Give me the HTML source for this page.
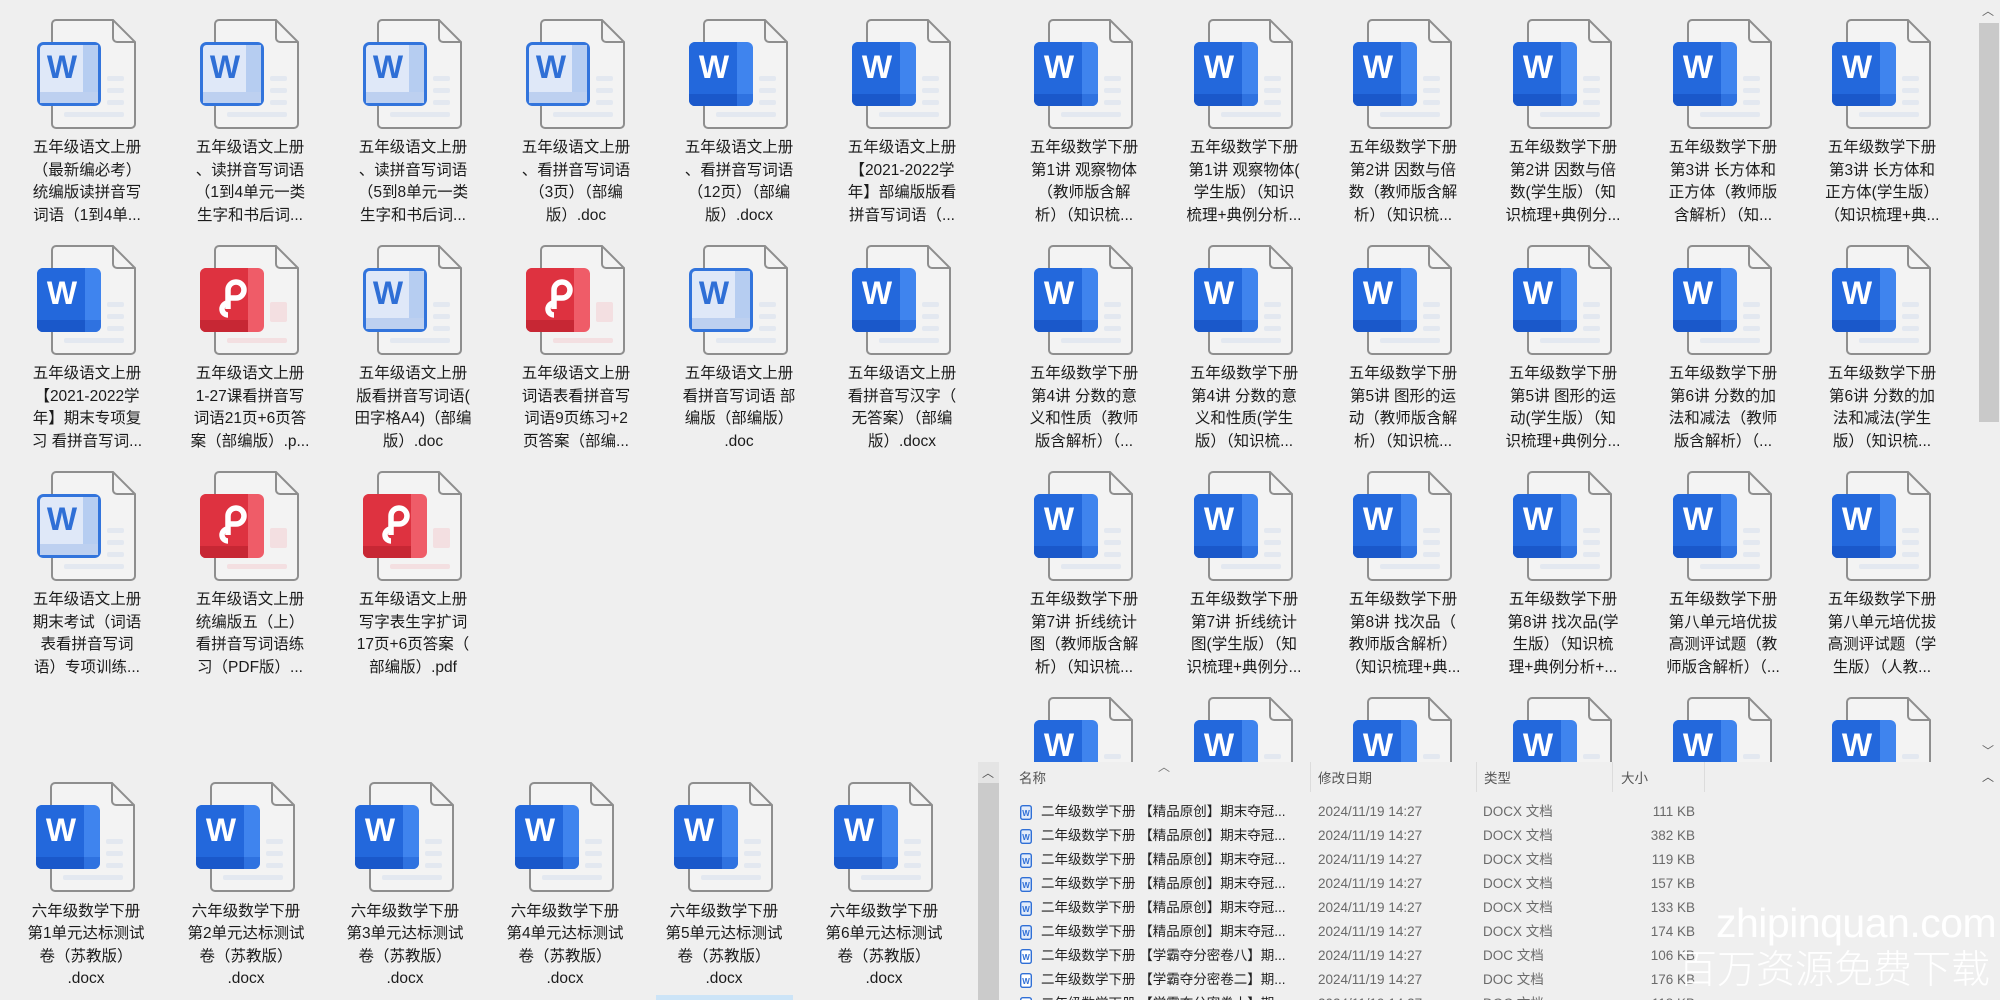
<!DOCTYPE html>
<html><head><meta charset="utf-8">
<style>
*{margin:0;padding:0;box-sizing:border-box}
html,body{width:2000px;height:1000px;overflow:hidden;background:#efefef}
body{position:relative;font-family:"Liberation Sans","Noto Sans CJK SC",sans-serif;color:#1b1b1b}
.it{position:absolute;width:150px;text-align:center}
.it svg{display:block;width:100px;height:112px;margin-left:25px}
.it .t{margin-top:6px;font-size:15.5px;line-height:22.6px;white-space:nowrap}
#list{position:absolute;left:978px;top:762px;width:1022px;height:238px;background:#efefef;z-index:5}
.row{position:absolute;left:0;width:1022px;height:24px;font-size:13.5px;line-height:24px;white-space:nowrap;color:#222}
.row span{position:absolute;top:0}
.g{color:#6a6a6a}
.hd{position:absolute;top:5px;font-size:13.5px;color:#555}
.sep{position:absolute;top:0;width:1px;height:30px;background:#dcdcdc}
</style></head><body>
<svg width="0" height="0" style="position:absolute">
<defs>
<symbol id="pg" viewBox="0 0 100 112">
<path d="M19,1 H76 L98,23 V105 a4,4 0 0 1 -4,4 H19 a4,4 0 0 1 -4,-4 V5 a4,4 0 0 1 4,-4Z" fill="#f3f3f3" stroke="#8e8e8e" stroke-width="2"/>
<path d="M76,1 V19 a4,4 0 0 0 4,4 H98" fill="none" stroke="#8e8e8e" stroke-width="2"/>
<rect x="70" y="57" width="17" height="5" rx="2" fill="#e3e8f0"/>
<rect x="70" y="69" width="17" height="5" rx="2" fill="#e3e8f0"/>
<rect x="70" y="81" width="17" height="5" rx="2" fill="#e3e8f0"/>
<rect x="27" y="93" width="60" height="5" rx="2" fill="#e3e8f0"/>
</symbol>
<symbol id="pgr" viewBox="0 0 100 112">
<path d="M19,1 H76 L98,23 V105 a4,4 0 0 1 -4,4 H19 a4,4 0 0 1 -4,-4 V5 a4,4 0 0 1 4,-4Z" fill="#f3f3f3" stroke="#8e8e8e" stroke-width="2"/>
<path d="M76,1 V19 a4,4 0 0 0 4,4 H98" fill="none" stroke="#8e8e8e" stroke-width="2"/>
<rect x="70" y="57" width="17" height="20" rx="2" fill="#f3dfe1"/>
<rect x="27" y="93" width="60" height="5" rx="2" fill="#f3dfe1"/>
</symbol>
<symbol id="bs" viewBox="0 0 100 112">
<rect x="0" y="23" width="64" height="64" rx="6" fill="#3f84ee"/>
<path d="M6,23 H48 V87 H6 a6,6 0 0 1 -6,-6 V29 a6,6 0 0 1 6,-6Z" fill="#2368dc"/>
<path d="M0,75 H48 V87 H6 a6,6 0 0 1 -6,-6Z" fill="#1a58ca"/>
<path d="M48,75 H64 V81 a6,6 0 0 1 -6,6 H48Z" fill="#2f72e0"/>
</symbol>
<symbol id="bo" viewBox="0 0 100 112">
<rect x="1.5" y="24.5" width="61" height="61" rx="5" fill="#dfe8f8" stroke="#3274dc" stroke-width="3"/>
<rect x="46" y="26" width="15" height="58" fill="#b6cdf1"/>
<rect x="3" y="73" width="58" height="11" fill="#bdd0f0"/>
</symbol>
<symbol id="bp" viewBox="0 0 100 112">
<rect x="0" y="23" width="64" height="64" rx="6" fill="#ef5c68"/>
<path d="M6,23 H48 V87 H6 a6,6 0 0 1 -6,-6 V29 a6,6 0 0 1 6,-6Z" fill="#de3240"/>
<path d="M0,75 H48 V87 H6 a6,6 0 0 1 -6,-6Z" fill="#c72734"/>
<path d="M28,64 V45 a8,8 0 1 1 8,8 H28" fill="none" stroke="#fff" stroke-width="5.5"/>
<path d="M28,58 a6,6 0 1 0 0,12" fill="none" stroke="#fff" stroke-width="5.5"/>
</symbol>
</defs>
</svg>

<!-- TOP LEFT -->
<div class="it" style="left:12px;top:19px"><svg viewBox="0 0 100 112"><use href="#pg"/><use href="#bo"/><text x="25" y="59" font-size="32" font-weight="bold" text-anchor="middle" fill="#2f6fd6" font-family="Liberation Sans">W</text></svg><div class="t">五年级语文上册<br>（最新编必考）<br>统编版读拼音写<br>词语（1到4单...</div></div>
<div class="it" style="left:175px;top:19px"><svg viewBox="0 0 100 112"><use href="#pg"/><use href="#bo"/><text x="25" y="59" font-size="32" font-weight="bold" text-anchor="middle" fill="#2f6fd6" font-family="Liberation Sans">W</text></svg><div class="t">五年级语文上册<br>、读拼音写词语<br>（1到4单元一类<br>生字和书后词...</div></div>
<div class="it" style="left:338px;top:19px"><svg viewBox="0 0 100 112"><use href="#pg"/><use href="#bo"/><text x="25" y="59" font-size="32" font-weight="bold" text-anchor="middle" fill="#2f6fd6" font-family="Liberation Sans">W</text></svg><div class="t">五年级语文上册<br>、读拼音写词语<br>（5到8单元一类<br>生字和书后词...</div></div>
<div class="it" style="left:501px;top:19px"><svg viewBox="0 0 100 112"><use href="#pg"/><use href="#bo"/><text x="25" y="59" font-size="32" font-weight="bold" text-anchor="middle" fill="#2f6fd6" font-family="Liberation Sans">W</text></svg><div class="t">五年级语文上册<br>、看拼音写词语<br>（3页）（部编<br>版）.doc</div></div>
<div class="it" style="left:664px;top:19px"><svg viewBox="0 0 100 112"><use href="#pg"/><use href="#bs"/><text x="25" y="59" font-size="32" font-weight="bold" text-anchor="middle" fill="#fff" font-family="Liberation Sans">W</text></svg><div class="t">五年级语文上册<br>、看拼音写词语<br>（12页）（部编<br>版）.docx</div></div>
<div class="it" style="left:827px;top:19px"><svg viewBox="0 0 100 112"><use href="#pg"/><use href="#bs"/><text x="25" y="59" font-size="32" font-weight="bold" text-anchor="middle" fill="#fff" font-family="Liberation Sans">W</text></svg><div class="t">五年级语文上册<br>【2021-2022学<br>年】部编版版看<br>拼音写词语（...</div></div>

<div class="it" style="left:12px;top:245px"><svg viewBox="0 0 100 112"><use href="#pg"/><use href="#bs"/><text x="25" y="59" font-size="32" font-weight="bold" text-anchor="middle" fill="#fff" font-family="Liberation Sans">W</text></svg><div class="t">五年级语文上册<br>【2021-2022学<br>年】期末专项复<br>习 看拼音写词...</div></div>
<div class="it" style="left:175px;top:245px"><svg viewBox="0 0 100 112"><use href="#pgr"/><use href="#bp"/></svg><div class="t">五年级语文上册<br>1-27课看拼音写<br>词语21页+6页答<br>案（部编版）.p...</div></div>
<div class="it" style="left:338px;top:245px"><svg viewBox="0 0 100 112"><use href="#pg"/><use href="#bo"/><text x="25" y="59" font-size="32" font-weight="bold" text-anchor="middle" fill="#2f6fd6" font-family="Liberation Sans">W</text></svg><div class="t">五年级语文上册<br>版看拼音写词语(<br>田字格A4)（部编<br>版）.doc</div></div>
<div class="it" style="left:501px;top:245px"><svg viewBox="0 0 100 112"><use href="#pgr"/><use href="#bp"/></svg><div class="t">五年级语文上册<br>词语表看拼音写<br>词语9页练习+2<br>页答案（部编...</div></div>
<div class="it" style="left:664px;top:245px"><svg viewBox="0 0 100 112"><use href="#pg"/><use href="#bo"/><text x="25" y="59" font-size="32" font-weight="bold" text-anchor="middle" fill="#2f6fd6" font-family="Liberation Sans">W</text></svg><div class="t">五年级语文上册<br>看拼音写词语 部<br>编版（部编版）<br>.doc</div></div>
<div class="it" style="left:827px;top:245px"><svg viewBox="0 0 100 112"><use href="#pg"/><use href="#bs"/><text x="25" y="59" font-size="32" font-weight="bold" text-anchor="middle" fill="#fff" font-family="Liberation Sans">W</text></svg><div class="t">五年级语文上册<br>看拼音写汉字（<br>无答案）（部编<br>版）.docx</div></div>

<div class="it" style="left:12px;top:471px"><svg viewBox="0 0 100 112"><use href="#pg"/><use href="#bo"/><text x="25" y="59" font-size="32" font-weight="bold" text-anchor="middle" fill="#2f6fd6" font-family="Liberation Sans">W</text></svg><div class="t">五年级语文上册<br>期末考试（词语<br>表看拼音写词<br>语）专项训练...</div></div>
<div class="it" style="left:175px;top:471px"><svg viewBox="0 0 100 112"><use href="#pgr"/><use href="#bp"/></svg><div class="t">五年级语文上册<br>统编版五（上）<br>看拼音写词语练<br>习（PDF版）...</div></div>
<div class="it" style="left:338px;top:471px"><svg viewBox="0 0 100 112"><use href="#pgr"/><use href="#bp"/></svg><div class="t">五年级语文上册<br>写字表生字扩词<br>17页+6页答案（<br>部编版）.pdf</div></div>

<!-- RIGHT GRID -->
<div class="it" style="left:1009px;top:19px"><svg viewBox="0 0 100 112"><use href="#pg"/><use href="#bs"/><text x="25" y="59" font-size="32" font-weight="bold" text-anchor="middle" fill="#fff" font-family="Liberation Sans">W</text></svg><div class="t">五年级数学下册<br>第1讲 观察物体<br>（教师版含解<br>析）（知识梳...</div></div>
<div class="it" style="left:1169px;top:19px"><svg viewBox="0 0 100 112"><use href="#pg"/><use href="#bs"/><text x="25" y="59" font-size="32" font-weight="bold" text-anchor="middle" fill="#fff" font-family="Liberation Sans">W</text></svg><div class="t">五年级数学下册<br>第1讲 观察物体(<br>学生版）（知识<br>梳理+典例分析...</div></div>
<div class="it" style="left:1328px;top:19px"><svg viewBox="0 0 100 112"><use href="#pg"/><use href="#bs"/><text x="25" y="59" font-size="32" font-weight="bold" text-anchor="middle" fill="#fff" font-family="Liberation Sans">W</text></svg><div class="t">五年级数学下册<br>第2讲 因数与倍<br>数（教师版含解<br>析）（知识梳...</div></div>
<div class="it" style="left:1488px;top:19px"><svg viewBox="0 0 100 112"><use href="#pg"/><use href="#bs"/><text x="25" y="59" font-size="32" font-weight="bold" text-anchor="middle" fill="#fff" font-family="Liberation Sans">W</text></svg><div class="t">五年级数学下册<br>第2讲 因数与倍<br>数(学生版）（知<br>识梳理+典例分...</div></div>
<div class="it" style="left:1648px;top:19px"><svg viewBox="0 0 100 112"><use href="#pg"/><use href="#bs"/><text x="25" y="59" font-size="32" font-weight="bold" text-anchor="middle" fill="#fff" font-family="Liberation Sans">W</text></svg><div class="t">五年级数学下册<br>第3讲 长方体和<br>正方体（教师版<br>含解析）（知...</div></div>
<div class="it" style="left:1807px;top:19px"><svg viewBox="0 0 100 112"><use href="#pg"/><use href="#bs"/><text x="25" y="59" font-size="32" font-weight="bold" text-anchor="middle" fill="#fff" font-family="Liberation Sans">W</text></svg><div class="t">五年级数学下册<br>第3讲 长方体和<br>正方体(学生版）<br>（知识梳理+典...</div></div>

<div class="it" style="left:1009px;top:245px"><svg viewBox="0 0 100 112"><use href="#pg"/><use href="#bs"/><text x="25" y="59" font-size="32" font-weight="bold" text-anchor="middle" fill="#fff" font-family="Liberation Sans">W</text></svg><div class="t">五年级数学下册<br>第4讲 分数的意<br>义和性质（教师<br>版含解析）（...</div></div>
<div class="it" style="left:1169px;top:245px"><svg viewBox="0 0 100 112"><use href="#pg"/><use href="#bs"/><text x="25" y="59" font-size="32" font-weight="bold" text-anchor="middle" fill="#fff" font-family="Liberation Sans">W</text></svg><div class="t">五年级数学下册<br>第4讲 分数的意<br>义和性质(学生<br>版）（知识梳...</div></div>
<div class="it" style="left:1328px;top:245px"><svg viewBox="0 0 100 112"><use href="#pg"/><use href="#bs"/><text x="25" y="59" font-size="32" font-weight="bold" text-anchor="middle" fill="#fff" font-family="Liberation Sans">W</text></svg><div class="t">五年级数学下册<br>第5讲 图形的运<br>动（教师版含解<br>析）（知识梳...</div></div>
<div class="it" style="left:1488px;top:245px"><svg viewBox="0 0 100 112"><use href="#pg"/><use href="#bs"/><text x="25" y="59" font-size="32" font-weight="bold" text-anchor="middle" fill="#fff" font-family="Liberation Sans">W</text></svg><div class="t">五年级数学下册<br>第5讲 图形的运<br>动(学生版）（知<br>识梳理+典例分...</div></div>
<div class="it" style="left:1648px;top:245px"><svg viewBox="0 0 100 112"><use href="#pg"/><use href="#bs"/><text x="25" y="59" font-size="32" font-weight="bold" text-anchor="middle" fill="#fff" font-family="Liberation Sans">W</text></svg><div class="t">五年级数学下册<br>第6讲 分数的加<br>法和减法（教师<br>版含解析）（...</div></div>
<div class="it" style="left:1807px;top:245px"><svg viewBox="0 0 100 112"><use href="#pg"/><use href="#bs"/><text x="25" y="59" font-size="32" font-weight="bold" text-anchor="middle" fill="#fff" font-family="Liberation Sans">W</text></svg><div class="t">五年级数学下册<br>第6讲 分数的加<br>法和减法(学生<br>版）（知识梳...</div></div>

<div class="it" style="left:1009px;top:471px"><svg viewBox="0 0 100 112"><use href="#pg"/><use href="#bs"/><text x="25" y="59" font-size="32" font-weight="bold" text-anchor="middle" fill="#fff" font-family="Liberation Sans">W</text></svg><div class="t">五年级数学下册<br>第7讲 折线统计<br>图（教师版含解<br>析）（知识梳...</div></div>
<div class="it" style="left:1169px;top:471px"><svg viewBox="0 0 100 112"><use href="#pg"/><use href="#bs"/><text x="25" y="59" font-size="32" font-weight="bold" text-anchor="middle" fill="#fff" font-family="Liberation Sans">W</text></svg><div class="t">五年级数学下册<br>第7讲 折线统计<br>图(学生版）（知<br>识梳理+典例分...</div></div>
<div class="it" style="left:1328px;top:471px"><svg viewBox="0 0 100 112"><use href="#pg"/><use href="#bs"/><text x="25" y="59" font-size="32" font-weight="bold" text-anchor="middle" fill="#fff" font-family="Liberation Sans">W</text></svg><div class="t">五年级数学下册<br>第8讲 找次品（<br>教师版含解析）<br>（知识梳理+典...</div></div>
<div class="it" style="left:1488px;top:471px"><svg viewBox="0 0 100 112"><use href="#pg"/><use href="#bs"/><text x="25" y="59" font-size="32" font-weight="bold" text-anchor="middle" fill="#fff" font-family="Liberation Sans">W</text></svg><div class="t">五年级数学下册<br>第8讲 找次品(学<br>生版）（知识梳<br>理+典例分析+...</div></div>
<div class="it" style="left:1648px;top:471px"><svg viewBox="0 0 100 112"><use href="#pg"/><use href="#bs"/><text x="25" y="59" font-size="32" font-weight="bold" text-anchor="middle" fill="#fff" font-family="Liberation Sans">W</text></svg><div class="t">五年级数学下册<br>第八单元培优拔<br>高测评试题（教<br>师版含解析）（...</div></div>
<div class="it" style="left:1807px;top:471px"><svg viewBox="0 0 100 112"><use href="#pg"/><use href="#bs"/><text x="25" y="59" font-size="32" font-weight="bold" text-anchor="middle" fill="#fff" font-family="Liberation Sans">W</text></svg><div class="t">五年级数学下册<br>第八单元培优拔<br>高测评试题（学<br>生版）（人教...</div></div>

<div class="it" style="left:1009px;top:697px"><svg viewBox="0 0 100 112"><use href="#pg"/><use href="#bs"/><text x="25" y="59" font-size="32" font-weight="bold" text-anchor="middle" fill="#fff" font-family="Liberation Sans">W</text></svg></div>
<div class="it" style="left:1169px;top:697px"><svg viewBox="0 0 100 112"><use href="#pg"/><use href="#bs"/><text x="25" y="59" font-size="32" font-weight="bold" text-anchor="middle" fill="#fff" font-family="Liberation Sans">W</text></svg></div>
<div class="it" style="left:1328px;top:697px"><svg viewBox="0 0 100 112"><use href="#pg"/><use href="#bs"/><text x="25" y="59" font-size="32" font-weight="bold" text-anchor="middle" fill="#fff" font-family="Liberation Sans">W</text></svg></div>
<div class="it" style="left:1488px;top:697px"><svg viewBox="0 0 100 112"><use href="#pg"/><use href="#bs"/><text x="25" y="59" font-size="32" font-weight="bold" text-anchor="middle" fill="#fff" font-family="Liberation Sans">W</text></svg></div>
<div class="it" style="left:1648px;top:697px"><svg viewBox="0 0 100 112"><use href="#pg"/><use href="#bs"/><text x="25" y="59" font-size="32" font-weight="bold" text-anchor="middle" fill="#fff" font-family="Liberation Sans">W</text></svg></div>
<div class="it" style="left:1807px;top:697px"><svg viewBox="0 0 100 112"><use href="#pg"/><use href="#bs"/><text x="25" y="59" font-size="32" font-weight="bold" text-anchor="middle" fill="#fff" font-family="Liberation Sans">W</text></svg></div>

<!-- right scrollbar -->
<div style="position:absolute;left:1978px;top:0;width:22px;height:762px;background:#efefef;z-index:4"></div>
<div style="position:absolute;left:1982px;top:2px;font-size:12px;color:#666;z-index:4">︿</div>
<div style="position:absolute;left:1979px;top:23px;width:20px;height:399px;background:#c9c9c9;z-index:4"></div>
<div style="position:absolute;left:1982px;top:742px;font-size:12px;color:#666;z-index:4">﹀</div>

<!-- BOTTOM LEFT -->
<div style="position:absolute;left:656px;top:995px;width:137px;height:5px;background:#cce4f7"></div>
<div class="it" style="left:11px;top:782px"><svg viewBox="0 0 100 112"><use href="#pg"/><use href="#bs"/><text x="25" y="59" font-size="32" font-weight="bold" text-anchor="middle" fill="#fff" font-family="Liberation Sans">W</text></svg><div class="t" style="margin-top:7px;line-height:22.4px">六年级数学下册<br>第1单元达标测试<br>卷（苏教版）<br>.docx</div></div>
<div class="it" style="left:171px;top:782px"><svg viewBox="0 0 100 112"><use href="#pg"/><use href="#bs"/><text x="25" y="59" font-size="32" font-weight="bold" text-anchor="middle" fill="#fff" font-family="Liberation Sans">W</text></svg><div class="t" style="margin-top:7px;line-height:22.4px">六年级数学下册<br>第2单元达标测试<br>卷（苏教版）<br>.docx</div></div>
<div class="it" style="left:330px;top:782px"><svg viewBox="0 0 100 112"><use href="#pg"/><use href="#bs"/><text x="25" y="59" font-size="32" font-weight="bold" text-anchor="middle" fill="#fff" font-family="Liberation Sans">W</text></svg><div class="t" style="margin-top:7px;line-height:22.4px">六年级数学下册<br>第3单元达标测试<br>卷（苏教版）<br>.docx</div></div>
<div class="it" style="left:490px;top:782px"><svg viewBox="0 0 100 112"><use href="#pg"/><use href="#bs"/><text x="25" y="59" font-size="32" font-weight="bold" text-anchor="middle" fill="#fff" font-family="Liberation Sans">W</text></svg><div class="t" style="margin-top:7px;line-height:22.4px">六年级数学下册<br>第4单元达标测试<br>卷（苏教版）<br>.docx</div></div>
<div class="it" style="left:649px;top:782px"><svg viewBox="0 0 100 112"><use href="#pg"/><use href="#bs"/><text x="25" y="59" font-size="32" font-weight="bold" text-anchor="middle" fill="#fff" font-family="Liberation Sans">W</text></svg><div class="t" style="margin-top:7px;line-height:22.4px">六年级数学下册<br>第5单元达标测试<br>卷（苏教版）<br>.docx</div></div>
<div class="it" style="left:809px;top:782px"><svg viewBox="0 0 100 112"><use href="#pg"/><use href="#bs"/><text x="25" y="59" font-size="32" font-weight="bold" text-anchor="middle" fill="#fff" font-family="Liberation Sans">W</text></svg><div class="t" style="margin-top:7px;line-height:22.4px">六年级数学下册<br>第6单元达标测试<br>卷（苏教版）<br>.docx</div></div>

<!-- LIST PANEL -->
<div id="list">
  <div style="position:absolute;left:0;top:0;width:21px;height:21px;background:#e4e4e4"></div>
  <div style="position:absolute;left:4px;top:2px;font-size:12px;color:#555">︿</div>
  <div style="position:absolute;left:0;top:21px;width:21px;height:217px;background:#cbcbcb"></div>
  <div style="position:absolute;left:180px;top:-4px;font-size:12px;color:#777">︿</div>
  <div class="hd" style="left:41px">名称</div>
  <div class="sep" style="left:332px"></div>
  <div class="hd" style="left:340px">修改日期</div>
  <div class="sep" style="left:498px"></div>
  <div class="hd" style="left:506px">类型</div>
  <div class="sep" style="left:634px"></div>
  <div class="hd" style="left:643px">大小</div>
  <div class="sep" style="left:726px"></div>
  <div style="position:absolute;left:1004px;top:6px;font-size:12px;color:#555">︿</div>
</div>
<div id="rows" style="position:absolute;left:978px;top:762px;width:1022px;height:238px;z-index:6;overflow:hidden">
  <div class="row" style="top:38px"><svg style="position:absolute;left:42px;top:5px" width="12" height="15" viewBox="0 0 12 15"><rect x="0.7" y="0.7" width="10.6" height="13.6" rx="2" fill="#e3ecfa" stroke="#2f6fd6" stroke-width="1.4"/><text x="6" y="11" font-size="8" font-weight="bold" text-anchor="middle" fill="#2f6fd6" font-family="Liberation Sans">W</text></svg><span style="left:63px">二年级数学下册 【精品原创】期末夺冠...</span><span class="g" style="left:340px">2024/11/19 14:27</span><span class="g" style="left:505px">DOCX 文档</span><span class="g" style="right:305px">111 KB</span></div>
  <div class="row" style="top:62px"><svg style="position:absolute;left:42px;top:5px" width="12" height="15" viewBox="0 0 12 15"><rect x="0.7" y="0.7" width="10.6" height="13.6" rx="2" fill="#e3ecfa" stroke="#2f6fd6" stroke-width="1.4"/><text x="6" y="11" font-size="8" font-weight="bold" text-anchor="middle" fill="#2f6fd6" font-family="Liberation Sans">W</text></svg><span style="left:63px">二年级数学下册 【精品原创】期末夺冠...</span><span class="g" style="left:340px">2024/11/19 14:27</span><span class="g" style="left:505px">DOCX 文档</span><span class="g" style="right:305px">382 KB</span></div>
  <div class="row" style="top:86px"><svg style="position:absolute;left:42px;top:5px" width="12" height="15" viewBox="0 0 12 15"><rect x="0.7" y="0.7" width="10.6" height="13.6" rx="2" fill="#e3ecfa" stroke="#2f6fd6" stroke-width="1.4"/><text x="6" y="11" font-size="8" font-weight="bold" text-anchor="middle" fill="#2f6fd6" font-family="Liberation Sans">W</text></svg><span style="left:63px">二年级数学下册 【精品原创】期末夺冠...</span><span class="g" style="left:340px">2024/11/19 14:27</span><span class="g" style="left:505px">DOCX 文档</span><span class="g" style="right:305px">119 KB</span></div>
  <div class="row" style="top:110px"><svg style="position:absolute;left:42px;top:5px" width="12" height="15" viewBox="0 0 12 15"><rect x="0.7" y="0.7" width="10.6" height="13.6" rx="2" fill="#e3ecfa" stroke="#2f6fd6" stroke-width="1.4"/><text x="6" y="11" font-size="8" font-weight="bold" text-anchor="middle" fill="#2f6fd6" font-family="Liberation Sans">W</text></svg><span style="left:63px">二年级数学下册 【精品原创】期末夺冠...</span><span class="g" style="left:340px">2024/11/19 14:27</span><span class="g" style="left:505px">DOCX 文档</span><span class="g" style="right:305px">157 KB</span></div>
  <div class="row" style="top:134px"><svg style="position:absolute;left:42px;top:5px" width="12" height="15" viewBox="0 0 12 15"><rect x="0.7" y="0.7" width="10.6" height="13.6" rx="2" fill="#e3ecfa" stroke="#2f6fd6" stroke-width="1.4"/><text x="6" y="11" font-size="8" font-weight="bold" text-anchor="middle" fill="#2f6fd6" font-family="Liberation Sans">W</text></svg><span style="left:63px">二年级数学下册 【精品原创】期末夺冠...</span><span class="g" style="left:340px">2024/11/19 14:27</span><span class="g" style="left:505px">DOCX 文档</span><span class="g" style="right:305px">133 KB</span></div>
  <div class="row" style="top:158px"><svg style="position:absolute;left:42px;top:5px" width="12" height="15" viewBox="0 0 12 15"><rect x="0.7" y="0.7" width="10.6" height="13.6" rx="2" fill="#e3ecfa" stroke="#2f6fd6" stroke-width="1.4"/><text x="6" y="11" font-size="8" font-weight="bold" text-anchor="middle" fill="#2f6fd6" font-family="Liberation Sans">W</text></svg><span style="left:63px">二年级数学下册 【精品原创】期末夺冠...</span><span class="g" style="left:340px">2024/11/19 14:27</span><span class="g" style="left:505px">DOCX 文档</span><span class="g" style="right:305px">174 KB</span></div>
  <div class="row" style="top:182px"><svg style="position:absolute;left:42px;top:5px" width="12" height="15" viewBox="0 0 12 15"><rect x="0.7" y="0.7" width="10.6" height="13.6" rx="2" fill="#fff" stroke="#2f6fd6" stroke-width="1.4"/><text x="6" y="11" font-size="8" font-weight="bold" text-anchor="middle" fill="#2f6fd6" font-family="Liberation Sans">W</text></svg><span style="left:63px">二年级数学下册 【学霸夺分密卷八】期...</span><span class="g" style="left:340px">2024/11/19 14:27</span><span class="g" style="left:505px">DOC 文档</span><span class="g" style="right:305px">106 KB</span></div>
  <div class="row" style="top:206px"><svg style="position:absolute;left:42px;top:5px" width="12" height="15" viewBox="0 0 12 15"><rect x="0.7" y="0.7" width="10.6" height="13.6" rx="2" fill="#fff" stroke="#2f6fd6" stroke-width="1.4"/><text x="6" y="11" font-size="8" font-weight="bold" text-anchor="middle" fill="#2f6fd6" font-family="Liberation Sans">W</text></svg><span style="left:63px">二年级数学下册 【学霸夺分密卷二】期...</span><span class="g" style="left:340px">2024/11/19 14:27</span><span class="g" style="left:505px">DOC 文档</span><span class="g" style="right:305px">176 KB</span></div>
  <div class="row" style="top:230px"><svg style="position:absolute;left:42px;top:5px" width="12" height="15" viewBox="0 0 12 15"><rect x="0.7" y="0.7" width="10.6" height="13.6" rx="2" fill="#fff" stroke="#2f6fd6" stroke-width="1.4"/></svg><span style="left:63px">二年级数学下册 【学霸夺分密卷十】期...</span><span class="g" style="left:340px">2024/11/19 14:27</span><span class="g" style="left:505px">DOC 文档</span><span class="g" style="right:305px">118 KB</span></div>
</div>

<!-- watermark -->
<div style="position:absolute;left:1716px;top:900px;font-family:'Liberation Sans',sans-serif;font-size:41px;font-weight:300;color:rgba(255,255,255,0.95);z-index:9;letter-spacing:-0.5px">zhipinquan.com</div>
<div style="position:absolute;left:1678px;top:946px;font-family:'Liberation Sans','Noto Sans CJK SC',sans-serif;font-size:39px;font-weight:300;color:rgba(255,255,255,0.95);z-index:9;line-height:50px">百万资源免费下载</div>
</body></html>
